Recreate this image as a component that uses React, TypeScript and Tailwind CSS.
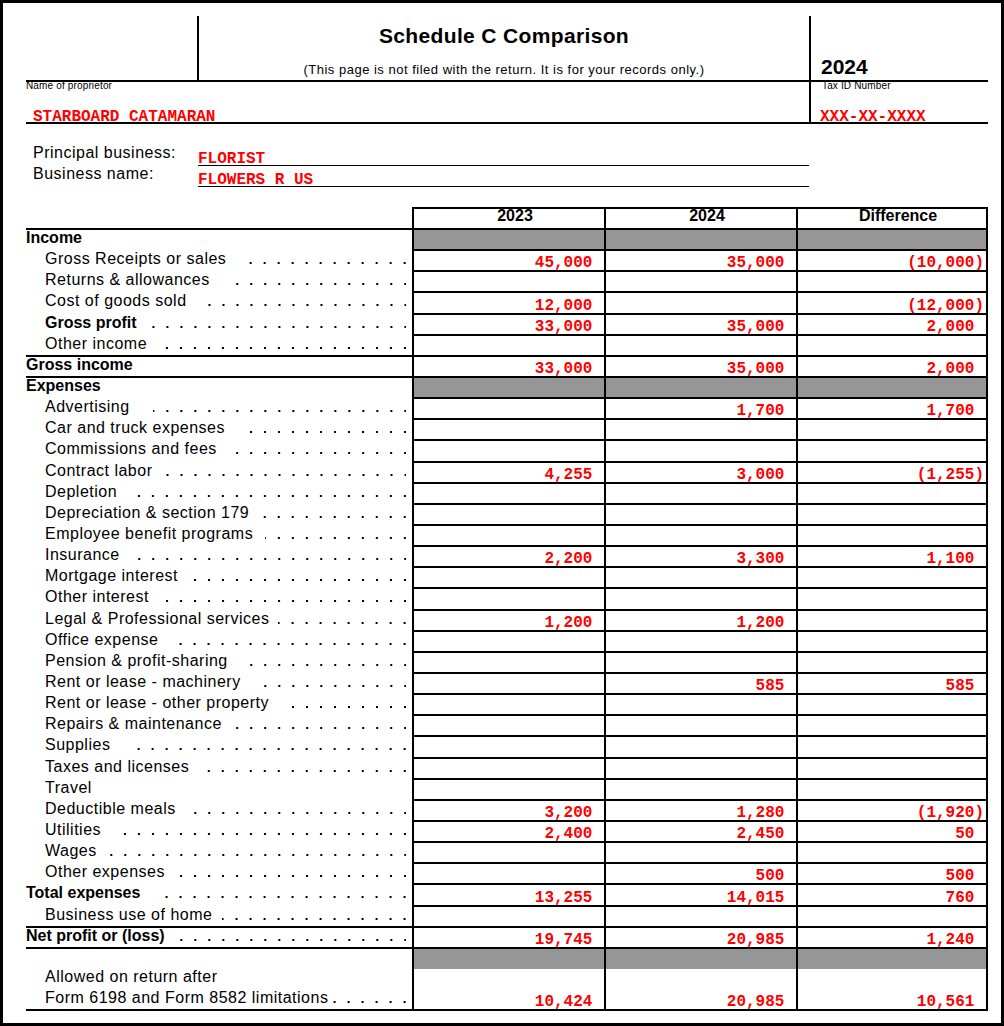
import React from 'react';

type Kind = 'section' | 'item' | 'boldItem' | 'total';

type Row = {
  label: string;
  kind: Kind;
  gray?: boolean;
  line?: boolean;
  dots?: string; // margin-left class for the leader dots
  v?: [string, string, string];
};

const rows: Row[] = [
  { label: 'Income', kind: 'section', gray: true, line: true },
  { label: 'Gross Receipts or sales', kind: 'item', dots: 'ml-[13px]', v: ['45,000', '35,000', '(10,000)'] },
  { label: 'Returns & allowances', kind: 'item', dots: 'ml-[18px]' },
  { label: 'Cost of goods sold', kind: 'item', dots: 'ml-[15px]', v: ['12,000', '', '(12,000)'] },
  { label: 'Gross profit', kind: 'boldItem', dots: 'ml-[12px]', v: ['33,000', '35,000', '2,000'] },
  { label: 'Other income', kind: 'item', dots: 'ml-[17px]' },
  { label: 'Gross income', kind: 'total', line: true, v: ['33,000', '35,000', '2,000'] },
  { label: 'Expenses', kind: 'section', gray: true, line: true },
  { label: 'Advertising', kind: 'item', dots: 'ml-[23px]', v: ['', '1,700', '1,700'] },
  { label: 'Car and truck expenses', kind: 'item', dots: 'ml-[18px]' },
  { label: 'Commissions and fees', kind: 'item', dots: 'ml-[18px]' },
  { label: 'Contract labor', kind: 'item', dots: 'ml-[12px]', v: ['4,255', '3,000', '(1,255)'] },
  { label: 'Depletion', kind: 'item', dots: 'ml-[20px]' },
  { label: 'Depreciation & section 179', kind: 'item', dots: 'ml-[14px]' },
  { label: 'Employee benefit programs', kind: 'item', dots: 'ml-[12px]' },
  { label: 'Insurance', kind: 'item', dots: 'ml-[14px]', v: ['2,200', '3,300', '1,100'] },
  { label: 'Mortgage interest', kind: 'item', dots: 'ml-[12px]' },
  { label: 'Other interest', kind: 'item', dots: 'ml-[14px]' },
  { label: 'Legal & Professional services', kind: 'item', dots: 'ml-[9px]', v: ['1,200', '1,200', ''] },
  { label: 'Office expense', kind: 'item', dots: 'ml-[18px]' },
  { label: 'Pension & profit-sharing', kind: 'item', dots: 'ml-[12px]' },
  { label: 'Rent or lease - machinery', kind: 'item', dots: 'ml-[12px]', v: ['', '585', '585'] },
  { label: 'Rent or lease - other property', kind: 'item', dots: 'ml-[12px]' },
  { label: 'Repairs & maintenance', kind: 'item', dots: 'ml-[14px]' },
  { label: 'Supplies', kind: 'item', dots: 'ml-[22px]' },
  { label: 'Taxes and licenses', kind: 'item', dots: 'ml-[10px]' },
  { label: 'Travel', kind: 'item' },
  { label: 'Deductible meals', kind: 'item', dots: 'ml-[10px]', v: ['3,200', '1,280', '(1,920)'] },
  { label: 'Utilities', kind: 'item', dots: 'ml-[12px]', v: ['2,400', '2,450', '50'] },
  { label: 'Wages', kind: 'item', dots: 'ml-[10px]' },
  { label: 'Other expenses', kind: 'item', dots: 'ml-[11px]', v: ['', '500', '500'] },
  { label: 'Total expenses', kind: 'total', dots: 'ml-[19px]', v: ['13,255', '14,015', '760'] },
  { label: 'Business use of home', kind: 'item', dots: 'ml-[10px]' },
  { label: 'Net profit or (loss)', kind: 'total', line: true, dots: 'ml-[9px]', v: ['19,745', '20,985', '1,240'] },
];

const DOTS =
  'flex-1 h-[2px] mr-[6px] bg-[linear-gradient(to_left,#000_2px,transparent_2px)] bg-[length:14px_2px] bg-repeat-x bg-right';

function Num({ v }: { v: string }) {
  if (!v) return null;
  const neg = v.endsWith(')');
  return (
    <span className="font-['Liberation_Mono','Courier_New',monospace] font-bold text-[16px] leading-[14px] text-[#ff0000] whitespace-pre">
      {v}
      {!neg && <span className="invisible">)</span>}
    </span>
  );
}

function TableRow({ r }: { r: Row }) {
  const bold = r.kind !== 'item';
  const indent = r.kind === 'item' || r.kind === 'boldItem';
  const vals = r.v ?? ['', '', ''];
  return (
    <div className="flex h-[21.15px]">
      <div
        className={`w-[386px] flex items-start border-t-2 ${r.line ? 'border-black' : 'border-transparent'} ${
          indent ? 'pl-[19px]' : 'pl-0'
        }`}
      >
        <span
          className={`text-[16px] leading-[15px] whitespace-nowrap ${
            bold ? 'font-bold tracking-[0px]' : 'font-normal tracking-[0.5px]'
          }`}
        >
          {r.label}
        </span>
        {r.dots && <div className={`${DOTS} mt-[11px] ${r.dots}`} />}
      </div>
      {vals.map((val, i) => (
        <div
          key={i}
          className={`w-[192px] flex items-end justify-end pr-[2px] border-t-2 border-l-2 border-black ${
            i === 2 ? 'border-r-2' : ''
          } ${r.gray ? 'bg-[#969696]' : 'bg-white'}`}
        >
          <Num v={val} />
        </div>
      ))}
    </div>
  );
}

export default function App() {
  const bottomVals = ['10,424', '20,985', '10,561'];
  return (
    <div className="w-[1004px] h-[1026px] border-[3px] border-black bg-white pl-[23px] pr-[13px] pt-[13px] text-black font-['Liberation_Sans',Arial,sans-serif]">
      {/* Header row 1 */}
      <div className="flex h-[66px] border-b-2 border-black">
        <div className="w-[173px] border-r-2 border-black" />
        <div className="flex-1 flex flex-col items-center border-r-2 border-black">
          <div className="mt-[9px] text-[21px] leading-[21px] font-bold tracking-[0.35px] whitespace-nowrap">
            Schedule C Comparison
          </div>
          <div className="mt-[17px] text-[13px] leading-[13px] tracking-[0.5px] whitespace-nowrap">
            (This page is not filed with the return. It is for your records only.)
          </div>
        </div>
        <div className="w-[177px] pl-[10px] pt-[40px] text-[21px] leading-[21px] font-bold">2024</div>
      </div>

      {/* Header row 2 */}
      <div className="flex h-[42px] border-b-2 border-black">
        <div className="w-[785px] border-r-2 border-black">
          <div className="text-[10px] leading-[7px] tracking-[0.15px] whitespace-nowrap">Name of proprietor</div>
          <div className="mt-[20px] pl-[7px] font-['Liberation_Mono','Courier_New',monospace] font-bold text-[16px] leading-[16px] text-[#ff0000] whitespace-pre">
            STARBOARD CATAMARAN
          </div>
        </div>
        <div className="flex-1">
          <div className="pl-[11px] text-[10px] leading-[7px] tracking-[0.15px] whitespace-nowrap">Tax ID Number</div>
          <div className="mt-[20px] pl-[9px] font-['Liberation_Mono','Courier_New',monospace] font-bold text-[16px] leading-[16px] text-[#ff0000]">
            XXX-XX-XXXX
          </div>
        </div>
      </div>

      {/* Principal business */}
      <div className="h-[83px] pt-[21px] pl-[7px]">
        <div className="flex h-[21px]">
          <div className="w-[165px] text-[16px] leading-[15px] tracking-[0.5px] whitespace-nowrap">Principal business:</div>
          <div className="w-[611px] flex items-end border-b border-black">
            <span className="font-['Liberation_Mono','Courier_New',monospace] font-bold text-[16px] leading-[12px] text-[#ff0000]">
              FLORIST
            </span>
          </div>
        </div>
        <div className="flex h-[21px]">
          <div className="w-[165px] text-[16px] leading-[15px] tracking-[0.5px] whitespace-nowrap">Business name:</div>
          <div className="w-[611px] flex items-end border-b border-black">
            <span className="font-['Liberation_Mono','Courier_New',monospace] font-bold text-[16px] leading-[12px] text-[#ff0000] whitespace-pre">
              FLOWERS R US
            </span>
          </div>
        </div>
      </div>

      {/* Table header */}
      <div className="flex h-[21px]">
        <div className="w-[386px]" />
        {['2023', '2024', 'Difference'].map((t, i) => (
          <div
            key={t}
            className={`w-[192px] border-t-2 border-l-2 border-black ${
              i === 2 ? 'border-r-2' : ''
            } pl-[12px] text-center text-[16px] leading-[13px] font-bold`}
          >
            {t}
          </div>
        ))}
      </div>

      {rows.map((r) => (
        <TableRow key={r.label} r={r} />
      ))}

      {/* Allowed on return */}
      <div className="flex h-[64px]">
        <div className="w-[386px] border-t-2 border-b-2 border-black pl-[19px] pt-[17px] text-[16px] leading-[21px] tracking-[0.5px]">
          <div className="whitespace-nowrap">Allowed on return after</div>
          <div className="flex items-start">
            <span className="whitespace-nowrap">Form 6198 and Form 8582 limitations</span>
            <div className={`${DOTS} mt-[14px] ml-[2px]`} />
          </div>
        </div>
        {bottomVals.map((val, i) => (
          <div
            key={i}
            className={`w-[192px] flex flex-col border-t-2 border-b-2 border-l-2 border-black ${
              i === 2 ? 'border-r-2' : ''
            }`}
          >
            <div className="h-[20px] bg-[#969696]" />
            <div className="flex-1 flex items-end justify-end pr-[2px]">
              <Num v={val} />
            </div>
          </div>
        ))}
      </div>
    </div>
  );
}
